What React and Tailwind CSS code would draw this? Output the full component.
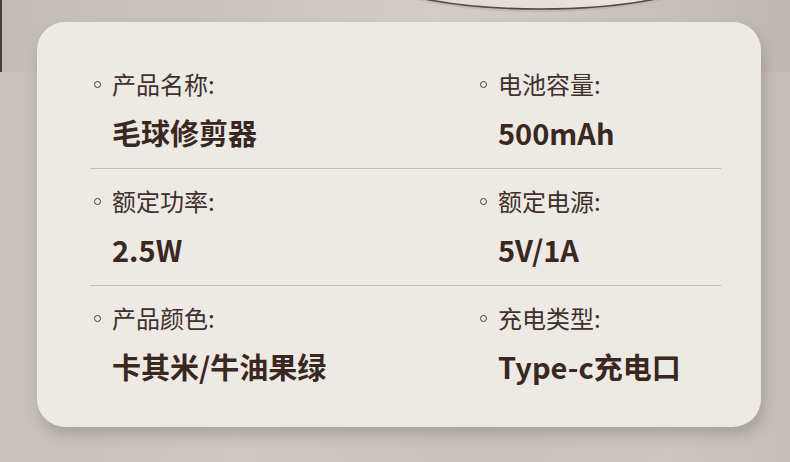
import React from "react";

const specs = [
  [
    { label: "产品名称:", value: "毛球修剪器" },
    { label: "电池容量:", value: "500mAh" },
  ],
  [
    { label: "额定功率:", value: "2.5W" },
    { label: "额定电源:", value: "5V/1A" },
  ],
  [
    { label: "产品颜色:", value: "卡其米/牛油果绿" },
    { label: "充电类型:", value: "Type-c充电口" },
  ],
];

const Spec = ({ label, value }) => (
  <div className="flex flex-col gap-[15px]">
    <div className="flex h-[30px] items-center gap-[11px]">
      <span className="h-[7px] w-[7px] rounded-full border border-[#4a3a31]" />
      <span className="text-[24px] leading-[30px] text-[#40302a]">{label}</span>
    </div>
    <div className="h-[36px] pl-[18px] text-[29px] font-bold leading-[36px] text-[#3a2720]">
      {value}
    </div>
  </div>
);

export default function App() {
  return (
    <div
      className="relative h-[462px] w-[790px] overflow-hidden bg-[linear-gradient(90deg,#c6c1bd,#cdc8c4_30%,#c8c3bf_60%,#cbc6c2_85%,#c4beba)]"
      style={{ fontFamily: '"Noto Sans CJK SC", "Noto Sans", sans-serif' }}
    >
      {/* background top band with plate */}
      <div className="absolute left-0 top-0 h-[72px] w-full bg-[linear-gradient(90deg,#c3bcb6,#cdc6c0_35%,#d3cdc8_55%,#c9c2bc_80%,#bfb8b2)]">
        <div className="h-full w-[2px] bg-[#4e3f36]" />
      </div>
      <svg className="absolute left-0 top-0" width="790" height="30">
        <defs>
          <linearGradient id="plate" x1="0" y1="0" x2="1" y2="0">
            <stop offset="0" stopColor="#ddd7d2" />
            <stop offset="1" stopColor="#ece8e4" />
          </linearGradient>
        </defs>
        <ellipse cx="540" cy="-30" rx="176" ry="42" fill="#b5aaa2" opacity="0.5" />
        <ellipse cx="540" cy="-31" rx="174" ry="40" fill="url(#plate)" stroke="#5b463a" strokeWidth="1.6" />
      </svg>

      {/* card */}
      <div className="relative ml-[37px] mt-[22px] h-[405px] w-[724px] rounded-[28px] bg-[#ede9e5] pt-[30px] shadow-[3px_8px_14px_rgba(90,70,60,0.28)]">
        {specs.map((row, i) => (
          <div key={i}>
            {i > 0 && <div className="ml-[53px] mr-[40px] h-px bg-[#c4bcb6]" />}
            <div className="grid grid-cols-[386px_1fr] pb-[18px] pl-[57px] pt-[17px]">
              {row.map((s) => (
                <Spec key={s.label} {...s} />
              ))}
            </div>
          </div>
        ))}
      </div>
    </div>
  );
}
